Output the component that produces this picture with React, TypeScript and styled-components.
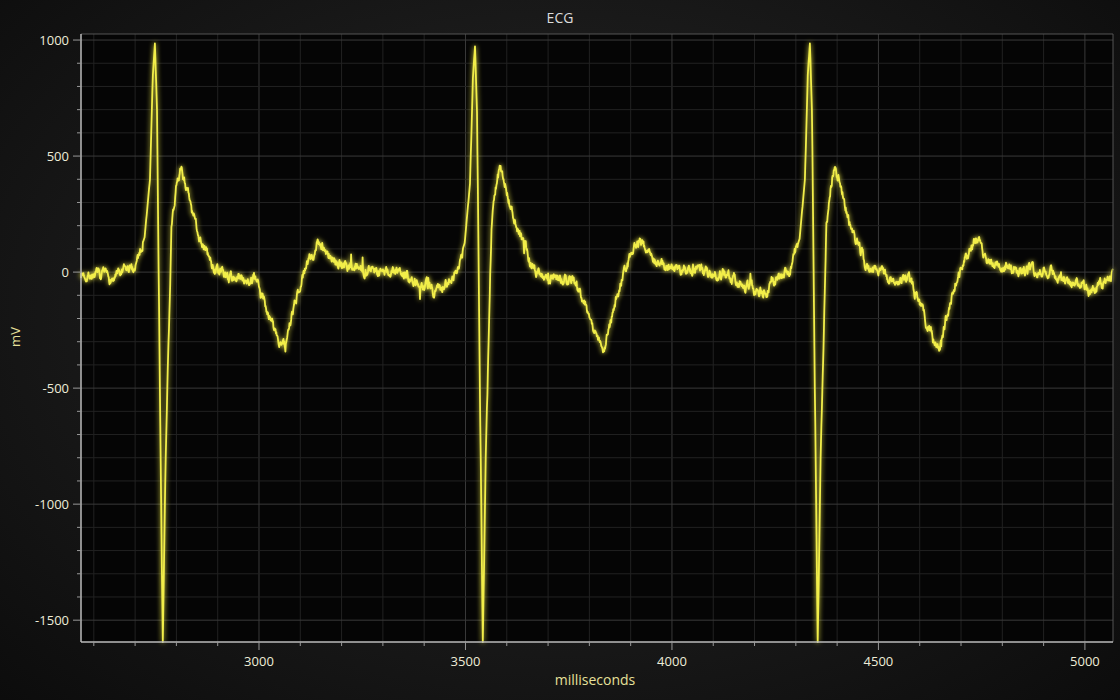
import React, { useMemo } from 'react';
import styled, { createGlobalStyle } from 'styled-components';

const GlobalStyle = createGlobalStyle`
  html, body { margin: 0; padding: 0; background: #111; }
  body { font-family: 'Open Sans', 'Liberation Sans', sans-serif; }
`;

const Page = styled.div`
  width: 1120px;
  height: 700px;
  display: flex;
  flex-direction: column;
  background: radial-gradient(ellipse at 50% 45%, #2a2a2a 0%, #1c1c1c 45%, #0c0c0c 100%);
  color: #e8e6d0;
  overflow: hidden;
`;

const Title = styled.div`
  height: 34px;
  display: flex;
  align-items: center;
  justify-content: center;
  font-size: 14px;
  color: #dcdcdc;
`;

const ChartRow = styled.div`
  height: 636px;
  display: flex;
`;

const YTitle = styled.div`
  width: 30px;
  display: flex;
  align-items: center;
  justify-content: center;
  font-size: 13px;
  color: #e6e09a;
  span { transform: rotate(-90deg); white-space: nowrap; margin-bottom: 30px; }
`;

const XTitle = styled.div`
  height: 30px;
  display: flex;
  justify-content: center;
  padding-left: 70px;
  font-size: 14px;
  color: #e6e09a;
`;

const Plot = styled.svg`
  display: block;
  overflow: visible;
`;

const L = 51, T = 0, R = 1083, B = 608;
const T0 = 2569, T1 = 5068;
const V0 = 1026, V1 = -1594;
const sx = (t: number) => L + ((t - T0) / (T1 - T0)) * (R - L);
const sy = (v: number) => T + ((V0 - v) / (V0 - V1)) * (B - T);

const beat: [number, number][] = [
  [-400, 0], [-150, -10], [-100, -30], [-50, 20], [-25, 150], [-12, 400], [-5, 850], [0, 985],
  [5, 700], [12, -500], [19, -1600], [26, -800], [40, 200], [55, 420], [62, 440], [75, 380],
  [90, 250], [110, 150], [140, 20], [180, -20], [240, -30], [270, -150], [300, -300], [315, -320],
  [330, -200], [360, 0], [400, 140], [420, 80], [450, 30], [600, 0], [680, -60], [740, -30], [800, 0],
];

function template(dt: number) {
  if (dt <= beat[0][0] || dt >= beat[beat.length - 1][0]) return 0;
  for (let i = 1; i < beat.length; i++) {
    const [a, va] = beat[i - 1];
    const [b, vb] = beat[i];
    if (dt <= b) return va + ((dt - a) / (b - a)) * (vb - va);
  }
  return 0;
}

function rng(seed: number) {
  return () => {
    seed |= 0; seed = (seed + 0x6d2b79f5) | 0;
    let t = Math.imul(seed ^ (seed >>> 15), 1 | seed);
    t = (t + Math.imul(t ^ (t >>> 7), 61 | t)) ^ t;
    return ((t ^ (t >>> 14)) >>> 0) / 4294967296;
  };
}

const peaks = [2748, 3523, 4334, 5120];

const Chart: React.FC = () => {
  const path = useMemo(() => {
    const rand = rng(7);
    let smooth = 0;
    const pts: string[] = [];
    for (let t = T0; t <= T1; t += 1) {
      let v = 0;
      let nearPeak = false;
      for (const p of peaks) {
        v += template(t - p);
        if (Math.abs(t - p) < 30) nearPeak = true;
      }
      smooth = smooth * 0.75 + (rand() - 0.5) * 34;
      const spike = rand() < 0.008 ? (rand() - 0.5) * 110 : 0;
      if (!nearPeak) v += smooth + spike;
      // artifact spikes on T wave
      if (t === 3064 || t === 4652) v -= 40;
      pts.push(`${sx(t).toFixed(1)},${sy(Math.max(V1, Math.min(V0, v))).toFixed(1)}`);
    }
    return 'M' + pts.join('L');
  }, []);

  const vMinor: number[] = [];
  for (let t = 2600; t <= 5000; t += 100) vMinor.push(t);
  const hMinor: number[] = [];
  for (let v = -1500; v <= 1000; v += 100) hMinor.push(v);

  return (
    <Plot width={1090} height={636}>
      <defs>
        <filter id="glow" x="-5%" y="-5%" width="110%" height="110%">
          <feGaussianBlur stdDeviation="2.5" result="b" />
          <feMerge><feMergeNode in="b" /><feMergeNode in="SourceGraphic" /></feMerge>
        </filter>
      </defs>
      <rect x={L} y={T} width={R - L} height={B - T} fill="#050505" />
      {vMinor.map(t => (
        <line key={'v' + t} x1={sx(t)} x2={sx(t)} y1={T} y2={B}
          stroke={t % 500 === 0 ? '#3a3a3a' : '#222'} strokeWidth={1} />
      ))}
      {hMinor.map(v => (
        <line key={'h' + v} x1={L} x2={R} y1={sy(v)} y2={sy(v)}
          stroke={v % 500 === 0 ? '#3a3a3a' : '#222'} strokeWidth={1} />
      ))}
      <path d={path} fill="none" stroke="#f2ee4a" strokeWidth={1.8} filter="url(#glow)" strokeLinejoin="round" />
      <line x1={L} x2={R} y1={T} y2={T} stroke="#555" />
      <line x1={R} x2={R} y1={T} y2={B} stroke="#555" />
      <line x1={L} x2={L} y1={T} y2={B} stroke="#bbb" strokeWidth={1.5} />
      <line x1={L} x2={R} y1={B} y2={B} stroke="#bbb" strokeWidth={1.5} />
      {hMinor.map(v => (
        <line key={'yt' + v} x1={v % 500 === 0 ? L - 8 : L - 4} x2={L} y1={sy(v)} y2={sy(v)} stroke="#999" />
      ))}
      {vMinor.map(t => (
        <line key={'xt' + t} x1={sx(t)} x2={sx(t)} y1={B} y2={t % 500 === 0 ? B + 8 : B + 4} stroke="#999" />
      ))}
      {[1000, 500, 0, -500, -1000, -1500].map(v => (
        <text key={'yl' + v} x={L - 12} y={sy(v) + 5} textAnchor="end" fontSize={13} fill="#eeecd8"
          fontFamily="'Open Sans', 'Liberation Sans', sans-serif">{v}</text>
      ))}
      {[3000, 3500, 4000, 4500, 5000].map(t => (
        <text key={'xl' + t} x={sx(t)} y={B + 24} textAnchor="middle" fontSize={13} fill="#eeecd8"
          fontFamily="'Open Sans', 'Liberation Sans', sans-serif">{t}</text>
      ))}
    </Plot>
  );
};

export default function App() {
  return (
    <>
      <GlobalStyle />
      <Page>
        <Title>ECG</Title>
        <ChartRow>
          <YTitle><span>mV</span></YTitle>
          <Chart />
        </ChartRow>
        <XTitle>milliseconds</XTitle>
      </Page>
    </>
  );
}
